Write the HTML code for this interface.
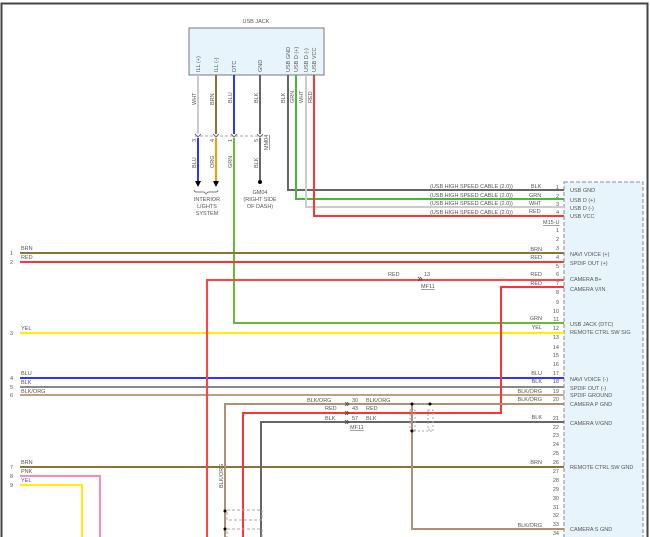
<!DOCTYPE html>
<html><head><meta charset="utf-8"><style>
html,body{margin:0;padding:0;background:#fff}
svg{display:block}
text{font-family:"Liberation Sans",sans-serif;font-size:5.5px;fill:#555}
.w{fill:none;stroke-width:2}
</style></head><body>
<svg width="650" height="537" viewBox="0 0 650 537" xmlns="http://www.w3.org/2000/svg">
<rect width="650" height="537" fill="#fff"/>
<path d="M1.5 537 V3.5 H647.5 V537" fill="none" stroke="#444" stroke-width="2"/>
<rect x="564" y="182" width="79" height="360" fill="#e8f4fb" stroke="#888" stroke-dasharray="4,2"/>
<rect x="189" y="28" width="135" height="47" fill="#e8f4fb" stroke="#777"/>
<text x="256" y="23" text-anchor="middle">USB JACK</text>
<g transform="rotate(-90)">
<text x="-72" y="200">ILL (+)</text>
<text x="-72" y="218">ILL (-)</text>
<text x="-72" y="236">DTC</text>
<text x="-72" y="262">GND</text>
<text x="-72" y="290">USB GND</text>
<text x="-72" y="298">USB D (+)</text>
<text x="-72" y="308">USB D (-)</text>
<text x="-72" y="316">USB VCC</text>
<text x="-105" y="196">WHT</text>
<text x="-105" y="214">BRN</text>
<text x="-103" y="232">BLU</text>
<text x="-103" y="258">BLK</text>
<text x="-103" y="285">BLK</text>
<text x="-103" y="294">GRN</text>
<text x="-103" y="303">WHT</text>
<text x="-103" y="312">RED</text>
<text x="-142" y="196">3</text>
<text x="-142" y="214">4</text>
<text x="-142" y="232">1</text>
<text x="-142" y="258">5</text>
<text x="-168" y="196">BLU</text>
<text x="-168" y="214">ORG</text>
<text x="-168" y="232">GRN</text>
<text x="-168" y="258">BLK</text>
<text x="-150" y="268" text-decoration="underline">MM04</text>
<text x="-488" y="223">BLK/ORG</text>
</g>
<path class="w" stroke="#ccc" d="M198 75V134"/>
<path class="w" stroke="#8c7236" d="M216 75V134"/>
<path class="w" stroke="#3333ff" d="M234 75V134"/>
<path class="w" stroke="#666" d="M260 75V134"/>
<path d="M195 136H265" stroke="#aaa" stroke-dasharray="3,2" fill="none"/>
<path d="M195 134l3 3 3-3M213 134l3 3 3-3M231 134l3 3 3-3M257 134l3 3 3-3" stroke="#555" fill="none" stroke-width=".8"/>
<path class="w" stroke="#3333ff" d="M198 138V182"/>
<path d="M195 181h6l-3 6z" fill="#000"/>
<path class="w" stroke="#ff9900" d="M216 138V182"/>
<path d="M213 181h6l-3 6z" fill="#000"/>
<path class="w" stroke="#66bb33" d="M234 138V323H564"/>
<path class="w" stroke="#666" d="M260 138V180"/>
<circle cx="260" cy="182" r="2" fill="#000"/>
<path d="M194 190q0 2 2 2h8l2 2 2-2h8q2 0 2-2" fill="none" stroke="#555" stroke-width=".7"/>
<text x="207" y="201" text-anchor="middle">INTERIOR</text>
<text x="207" y="208" text-anchor="middle">LIGHTS</text>
<text x="207" y="215" text-anchor="middle">SYSTEM</text>
<text x="260" y="194" text-anchor="middle">GM04</text>
<text x="260" y="201" text-anchor="middle">(RIGHT SIDE</text>
<text x="260" y="208" text-anchor="middle">OF DASH)</text>
<path class="w" stroke="#666" d="M288 75V190H564"/>
<path class="w" stroke="#44bb33" d="M296 75V199H564"/>
<path class="w" stroke="#ccc" d="M306 75V207H564"/>
<path class="w" stroke="#ff3333" d="M314 75V216H564"/>
<text x="430" y="188">(USB HIGH SPEED CABLE (2.0))</text>
<text x="430" y="197">(USB HIGH SPEED CABLE (2.0))</text>
<text x="430" y="205">(USB HIGH SPEED CABLE (2.0))</text>
<text x="430" y="214">(USB HIGH SPEED CABLE (2.0))</text>
<text x="531" y="188">BLK</text><text x="529" y="197">GRN</text><text x="529" y="205">WHT</text><text x="529" y="213">RED</text>
<text x="543" y="224" text-decoration="underline">M15-U</text>
<path class="w" stroke="#8c7236" d="M20 253H564"/>
<path class="w" stroke="#ff3333" d="M20 262H564"/>
<path class="w" stroke="#ffee00" d="M20 333H564"/>
<path class="w" stroke="#3333ff" d="M20 378H564"/>
<path class="w" stroke="#888" d="M20 387H564"/>
<path class="w" stroke="#c0a080" d="M20 395H564"/>
<path class="w" stroke="#8c7236" d="M20 467H564"/>
<path class="w" stroke="#ff88bb" d="M20 476H100V537"/>
<path class="w" stroke="#ffee00" d="M20 485H82V537"/>
<text x="10" y="255">1</text><text x="10" y="264">2</text><text x="10" y="335">3</text><text x="10" y="380">4</text><text x="10" y="389">5</text><text x="10" y="397">6</text><text x="10" y="469">7</text><text x="10" y="478">8</text><text x="10" y="487">9</text>
<text x="21" y="250">BRN</text><text x="21" y="259">RED</text><text x="21" y="330">YEL</text><text x="21" y="375">BLU</text><text x="21" y="384">BLK</text><text x="21" y="393">BLK/ORG</text><text x="21" y="464">BRN</text><text x="21" y="473">PNK</text><text x="21" y="482">YEL</text>
<path class="w" stroke="#ff4444" d="M207 537V280H564"/>
<path class="w" stroke="#ff3333" d="M564 287H501V413H243V537"/>
<path class="w" stroke="#b09070" d="M564 404H225V537"/>
<path class="w" stroke="#666" d="M564 422H261V537"/>
<path class="w" stroke="#b09070" d="M412 404V529H564"/>
<rect x="410" y="410" width="5" height="20" fill="none" stroke="#aaa" stroke-dasharray="2,2"/>
<rect x="428" y="410" width="5" height="20" fill="none" stroke="#aaa" stroke-dasharray="2,2"/>
<path d="M412 404h18M410 431h22" stroke="#aaa" stroke-dasharray="2,2"/>
<circle cx="412" cy="404" r="1.5" fill="#000"/><circle cx="430" cy="404" r="1.5" fill="#000"/><circle cx="412" cy="431" r="1.5" fill="#000"/>
<rect x="227" y="510" width="35" height="10" fill="none" stroke="#aaa" stroke-dasharray="3,2"/>
<rect x="227" y="529" width="35" height="10" fill="none" stroke="#aaa" stroke-dasharray="3,2"/>
<circle cx="225" cy="511" r="1.5" fill="#000"/><circle cx="225" cy="529" r="1.5" fill="#000"/>
<path d="M418 277l2 2-2 2M420 277l2 2-2 2M345 402l2 2-2 2M347 402l2 2-2 2M345 411l2 2-2 2M347 411l2 2-2 2M345 420l2 2-2 2M347 420l2 2-2 2" stroke="#444" fill="none" stroke-width=".8"/>
<text x="388" y="276">RED</text><text x="424" y="276">13</text><text x="421" y="288" text-decoration="underline">MF11</text>
<text x="307" y="402">BLK/ORG</text><text x="325" y="410">RED</text><text x="325" y="420">BLK</text>
<text x="352" y="402">30</text><text x="352" y="410">43</text><text x="352" y="420">57</text>
<text x="366" y="402">BLK/ORG</text><text x="366" y="410">RED</text><text x="366" y="420">BLK</text>
<text x="350" y="429" text-decoration="underline">MF11</text>
<g text-anchor="end">
<text x="542" y="251">BRN</text><text x="542" y="259">RED</text><text x="542" y="276">RED</text><text x="542" y="285">RED</text>
<text x="542" y="320">GRN</text><text x="542" y="329">YEL</text><text x="542" y="375">BLU</text><text x="542" y="383">BLK</text>
<text x="542" y="393">BLK/ORG</text><text x="542" y="401">BLK/ORG</text><text x="542" y="419">BLK</text><text x="542" y="464">BRN</text><text x="542" y="527">BLK/ORG</text>
<text x="559" y="189">1</text><text x="559" y="198">2</text><text x="559" y="206">3</text><text x="559" y="214">4</text>
<text x="559" y="232">1</text><text x="559" y="241">2</text><text x="559" y="250">3</text><text x="559" y="259">4</text><text x="559" y="268">5</text><text x="559" y="276">6</text><text x="559" y="285">7</text><text x="559" y="294">8</text><text x="559" y="304">9</text><text x="559" y="313">10</text><text x="559" y="321">11</text><text x="559" y="330">12</text><text x="559" y="339">13</text><text x="559" y="349">14</text>
<text x="559" y="357">15</text><text x="559" y="366">16</text><text x="559" y="375">17</text><text x="559" y="383">18</text><text x="559" y="393">19</text><text x="559" y="401">20</text><text x="559" y="420">21</text><text x="559" y="429">22</text><text x="559" y="437">23</text><text x="559" y="446">24</text><text x="559" y="455">25</text><text x="559" y="464">26</text><text x="559" y="473">27</text><text x="559" y="482">28</text><text x="559" y="491">29</text><text x="559" y="500">30</text><text x="559" y="509">31</text><text x="559" y="517">32</text><text x="559" y="526">33</text><text x="559" y="535">34</text>
</g>
<g>
<text x="570" y="192">USB GND</text><text x="570" y="202">USB D (+)</text><text x="570" y="210">USB D (-)</text><text x="570" y="218">USB VCC</text>
<text x="570" y="256">NAVI VOICE (+)</text><text x="570" y="265">SPDIF OUT (+)</text><text x="570" y="281">CAMERA B+</text><text x="570" y="291">CAMERA V/IN</text>
<text x="570" y="326">USB JACK (DTC)</text><text x="570" y="334">REMOTE CTRL SW SIG</text>
<text x="570" y="381">NAVI VOICE (-)</text><text x="570" y="390">SPDIF OUT (-)</text><text x="570" y="397">SPDIF GROUND</text><text x="570" y="406">CAMERA P GND</text>
<text x="570" y="425">CAMERA V/GND</text><text x="570" y="469">REMOTE CTRL SW GND</text><text x="570" y="531">CAMERA S GND</text>
</g>
</svg>
</body></html>
